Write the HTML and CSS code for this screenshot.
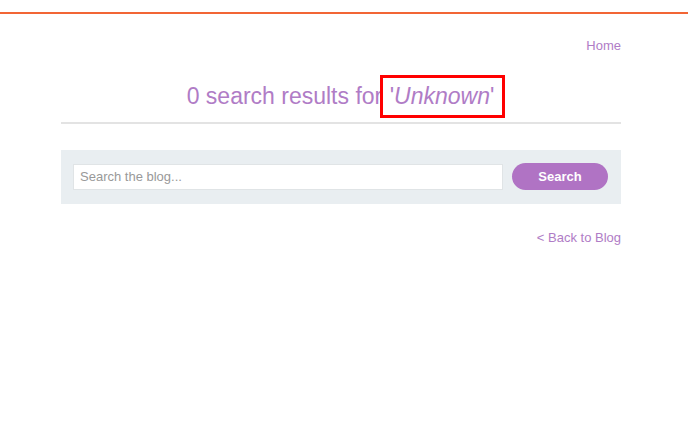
FILE: index.html
```html
<!DOCTYPE html>
<html>
<head>
<meta charset="utf-8">
<link rel="stylesheet" href="styles.css">
</head>
<body>
<div class="topbar"></div>
<div class="container">
  <nav class="nav"><a href="#">Home</a></nav>
  <h1 class="title">0 search results for <span class="highlight">'<em>Unknown</em>'</span></h1>
  <hr class="rule">
  <form class="search">
    <input class="search-input" type="text" placeholder="Search the blog...">
    <button class="search-btn" type="button">Search</button>
  </form>
  <div class="back"><a href="#">&lt; Back to Blog</a></div>
</div>
</body>
</html>
```
FILE: styles.css
```css
html, body { margin: 0; padding: 0; background: #fff; }
body { font-family: "Liberation Sans", Arial, sans-serif; color: #333; padding-right: 6px; }
.topbar { height: 12px; border-bottom: 2px solid #f26535; margin-right: -6px; }
.container { width: 560px; margin: 0 auto; padding-top: 24px; }
a { color: #b07cc6; text-decoration: none; }
.nav { display: flex; justify-content: flex-end; font-size: 13px; line-height: 16px; }
.title { margin: 21px 0 0; padding-left: 10px; text-align: center; font-weight: normal; font-size: 23px; line-height: 37px; color: #b07cc6; }
.highlight { display: inline-block; border: 3px solid #f00; padding: 0 8px 0 7px; margin-left: -9px; line-height: 37px; }
.title em { font-style: italic; }
.rule { margin: 4px 0 0; border: 0; height: 2px; background: #e3e3e3; }
.search { margin-top: 26px; background: #e9eef1; padding: 13px 13px 14px 12px; display: flex; align-items: center; gap: 9px; }
.search-input { flex: 1; height: 26px; box-sizing: border-box; border: 1px solid #e0e4e6; background: #fff; padding: 0 6px; font-family: "Liberation Sans", Arial, sans-serif; font-size: 13px; color: #333; outline: none; }
.search-input::placeholder { color: #999; }
.search-btn { width: 96px; height: 27px; border: 0; border-radius: 14px; background: #b073c4; color: #fff; font-family: "Liberation Sans", Arial, sans-serif; font-weight: bold; font-size: 13px; padding: 0; }
.back { display: flex; justify-content: flex-end; margin-top: 26px; font-size: 13px; line-height: 16px; }
```
